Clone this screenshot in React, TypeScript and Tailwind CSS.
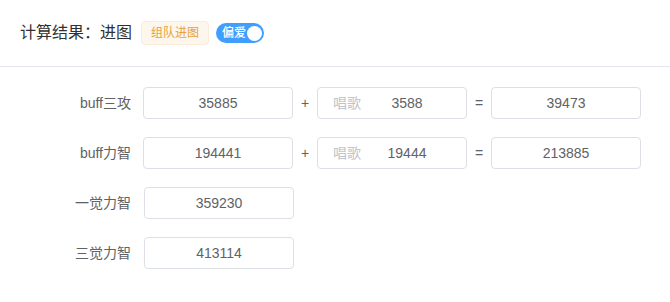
import React from "react";

const font = { fontFamily: '"Liberation Sans", "Noto Sans CJK SC", sans-serif' };

function Box({ value, prefix, shift }: { value: string; prefix?: string; shift?: boolean }) {
  return (
    <div
      className={`relative flex h-[32px] w-[150px] items-center rounded-[4px] border border-[#dcdfe6] bg-white text-[14px] text-[#606266] ${
        shift ? "ml-[1px]" : ""
      }`}
    >
      {prefix && (
        <span className="absolute left-[15px] top-0 flex h-full items-center text-[#c0c4cc]">{prefix}</span>
      )}
      <span className={`flex-1 text-center ${prefix ? "pl-[30px]" : ""}`}>{value}</span>
    </div>
  );
}

function Row({ label, children }: { label: string; children: React.ReactNode }) {
  return (
    <div className="flex h-[32px] items-center">
      <div className="w-[143px] pr-[12px] text-right text-[14px] text-[#606266]">{label}</div>
      {children}
    </div>
  );
}

function Sep({ c }: { c: string }) {
  return <span className="w-[24px] text-center text-[14px] text-[#606266]">{c}</span>;
}

export default function App() {
  return (
    <div className="h-[302px] w-[670px] bg-white" style={font}>
      <div className="flex h-[67px] items-center border-b border-[#e4e7ed] pl-[20px]">
        <span className="text-[16px] text-[#303133]">计算结果：进图</span>
        <span className="ml-[9px] flex h-[24px] items-center rounded-[4px] border border-[#faecd8] bg-[#fdf6ec] px-[9px] text-[12px] text-[#e6a23c]">
          组队进图
        </span>
        <div className="relative ml-[7px] flex h-[20px] w-[48px] items-center rounded-full bg-[#409eff]">
          <span className="pl-[6px] text-[12px] font-medium leading-none text-white">偏爱</span>
          <span className="absolute right-[2px] top-[2.5px] h-[15px] w-[15px] rounded-full bg-white" />
        </div>
      </div>
      <div className="flex flex-col gap-[18px] pt-[20px]">
        <Row label="buff三攻">
          <Box value="35885" />
          <Sep c="+" />
          <Box value="3588" prefix="唱歌" />
          <Sep c="=" />
          <Box value="39473" />
        </Row>
        <Row label="buff力智">
          <Box value="194441" />
          <Sep c="+" />
          <Box value="19444" prefix="唱歌" />
          <Sep c="=" />
          <Box value="213885" />
        </Row>
        <Row label="一觉力智">
          <Box value="359230" shift />
        </Row>
        <Row label="三觉力智">
          <Box value="413114" shift />
        </Row>
      </div>
    </div>
  );
}
